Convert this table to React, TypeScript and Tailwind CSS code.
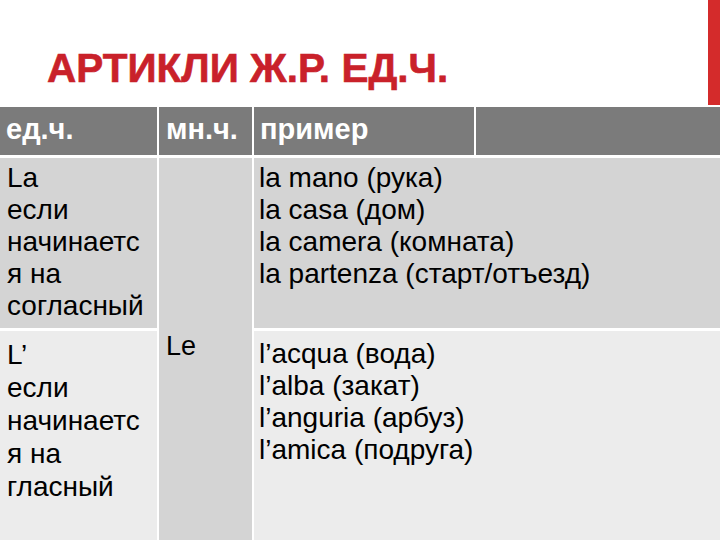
import React from "react";

const body = { fontFamily: '"Liberation Sans", Arial, sans-serif' };

export default function App() {
  return (
    <div className="w-[720px] h-[540px] bg-white overflow-hidden flex flex-col" style={body}>
      <div className="h-[107px] flex shrink-0">
        <div className="flex-1 pl-[47px] pt-[44px]">
          <h1 className="text-[40.5px] leading-[48px] font-bold text-[#c9212a] [-webkit-text-stroke:0.6px_#c9212a]">
            АРТИКЛИ Ж.Р. ЕД.Ч.
          </h1>
        </div>
        <div className="w-[12px] h-[105px] bg-[#d42b2b]" />
      </div>
      <div className="flex-1 grid grid-cols-[157px_93px_220px_1fr] grid-rows-[48px_170px_1fr] gap-x-[2px] gap-y-[3px] bg-white">
        <div className="bg-[#7b7b7b] text-white font-bold text-[29px] leading-[44px] pl-[6px]">ед.ч.</div>
        <div className="bg-[#7b7b7b] text-white font-bold text-[29px] leading-[44px] pl-[7px]">мн.ч.</div>
        <div className="bg-[#7b7b7b] text-white font-bold text-[29px] leading-[44px] pl-[6px]">пример</div>
        <div className="bg-[#7b7b7b]" />

        <div className="bg-[#d4d4d4] text-black text-[28px] leading-[32px] pl-[7px] pt-[4px]">
          La<br />если<br />начинаетс<br />я на<br />согласный
        </div>
        <div className="row-span-2 bg-[#d4d4d4] text-black text-[27px] leading-[32px] pl-[7px] pt-[172px]">Le</div>
        <div className="col-span-2 bg-[#d4d4d4] text-black text-[28px] leading-[32px] pl-[5px] pt-[4px]">
          la mano (рука)<br />la casa (дом)<br />la camera (комната)<br />la partenza (старт/отъезд)
        </div>

        <div className="bg-[#ececec] text-black text-[28px] leading-[33px] pl-[7px] pt-[7px]">
          L’<br />если<br />начинаетс<br />я на<br />гласный
        </div>
        <div className="col-span-2 bg-[#ececec] text-black text-[28px] leading-[32px] pl-[5px] pt-[7px]">
          l’acqua (вода)<br />l’alba (закат)<br />l’anguria (арбуз)<br />l’amica (подруга)
        </div>
      </div>
    </div>
  );
}
